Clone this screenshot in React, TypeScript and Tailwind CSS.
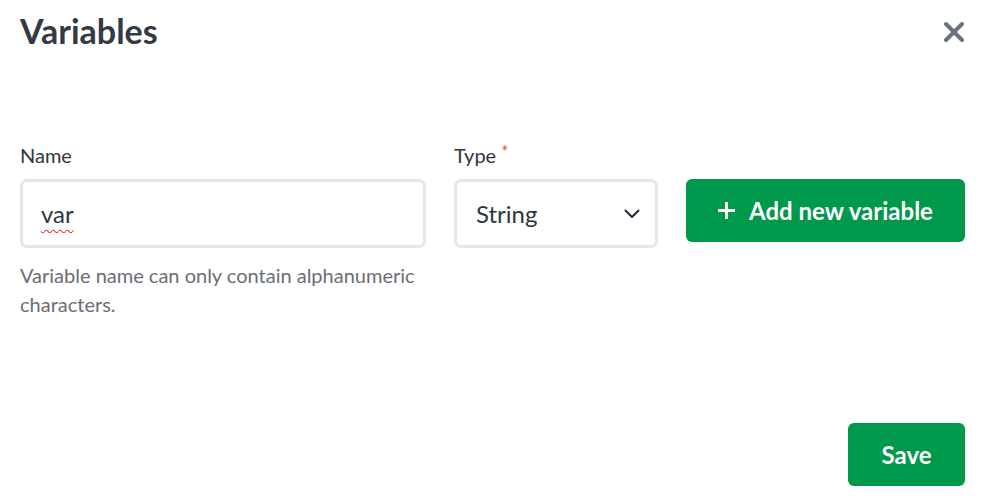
import React from "react";

export default function App() {
  return (
    <div className="w-[987px] h-[503px] bg-white flex flex-col font-['Lato',sans-serif] text-[#2f3640]">
      <div className="flex justify-between items-start pl-5 pr-[22px] pt-[10px]">
        <h1 className="text-[34px] leading-[42px] font-bold text-[#333a44]">Variables</h1>
        <button className="mt-[11px] w-[22px] h-[22px] text-[#6b7280]">
          <svg viewBox="0 0 22 22" width="22" height="22" fill="none" stroke="currentColor" strokeWidth="4" strokeLinecap="round">
            <path d="M3 3L19 19M19 3L3 19" />
          </svg>
        </button>
      </div>

      <div className="flex items-start gap-7 pl-5 mt-[91px]">
        <div className="w-[406px] flex flex-col">
          <label className="text-[20px] leading-[24px] text-[#2f3640]">Name</label>
          <div className="mt-3 h-[69px] border-[3px] border-[#e6e6e6] rounded-[7px] flex items-center pl-[18px]">
            <span className="text-[24px] text-[#2f3640] underline decoration-wavy decoration-[#e00] decoration-1 underline-offset-[6px]">var</span>
          </div>
          <p className="mt-[13px] text-[20px] leading-[29px] text-[#6b6e75]">
            Variable name can only contain alphanumeric characters.
          </p>
        </div>

        <div className="w-[204px] flex flex-col">
          <label className="text-[20px] leading-[24px] text-[#2f3640]">
            Type <span className="text-[#ef4444] text-[17px] align-top leading-[18px]">*</span>
          </label>
          <div className="mt-3 h-[69px] border-[3px] border-[#e6e6e6] rounded-[7px] flex items-center justify-between pl-[19px] pr-[15px]">
            <span className="text-[24px] text-[#2f3640]">String</span>
            <svg width="16" height="10" viewBox="0 0 16 10" fill="none" stroke="#1f2937" strokeWidth="2" strokeLinecap="round" strokeLinejoin="round">
              <path d="M1.5 1.5L8 8L14.5 1.5" />
            </svg>
          </div>
        </div>

        <div className="pt-9">
          <button className="w-[279px] h-[63px] rounded-[6px] bg-[#00984a] text-white flex items-center justify-center gap-[14px]">
            <svg width="17" height="17" viewBox="0 0 17 17" fill="none" stroke="white" strokeWidth="3">
              <path d="M8.5 0V17M0 8.5H17" />
            </svg>
            <span className="text-[24px] font-bold">Add new variable</span>
          </button>
        </div>
      </div>

      <div className="flex-1" />
      <div className="flex justify-end pr-[22px] pb-[17px]">
        <button className="w-[117px] h-[63px] rounded-[6px] bg-[#00984a] text-white text-[24px] font-bold">Save</button>
      </div>
    </div>
  );
}
